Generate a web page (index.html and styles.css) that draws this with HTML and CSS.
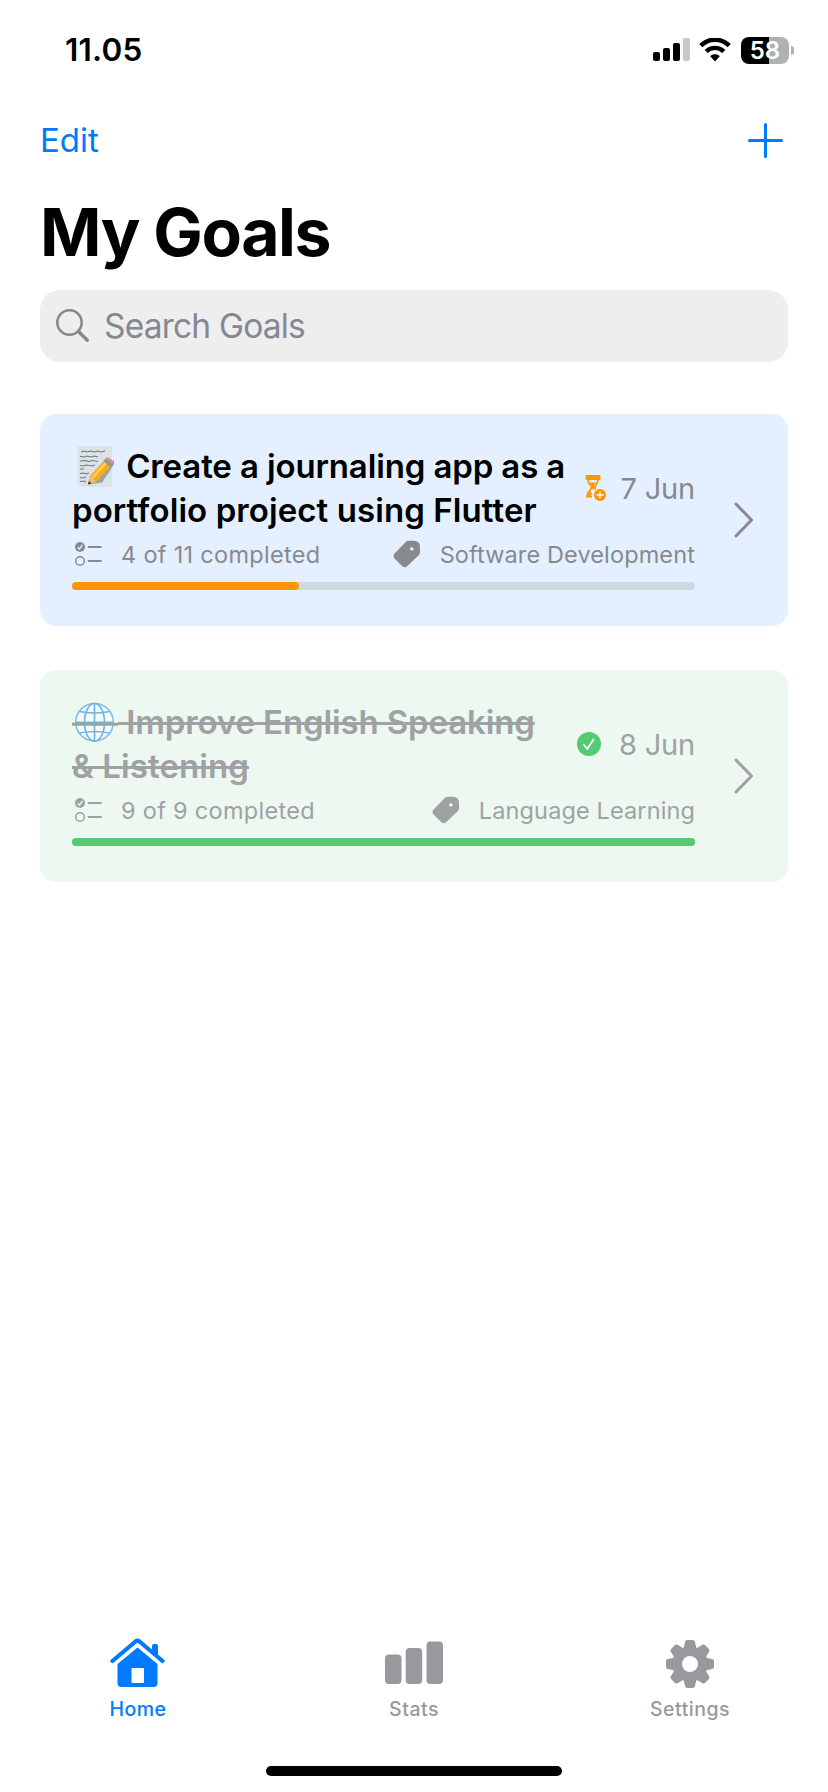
FILE: index.html
```html
<!DOCTYPE html>
<html lang="en">
<head>
    <meta charset="UTF-8">
    <meta name="viewport" content="width=device-width, initial-scale=1.0">
    <title>My Goals</title>
    <link rel="stylesheet" href="styles.css">
</head>
<body>
    <div class="status-bar">
        <span class="time">11.05</span>
        <div class="status-icons">
            <svg width="38" height="24" viewBox="0 0 38 24">
                <rect x="0" y="14" width="7" height="9" rx="2"/>
                <rect x="10" y="10" width="7" height="13" rx="2"/>
                <rect x="20" y="5" width="7" height="18" rx="2"/>
                <rect x="30" y="0" width="7" height="23" rx="2" fill="#c4c9cc"/>
            </svg>
            <svg class="wifi" width="32" height="24" viewBox="0 0 32 24">
                <path d="M1.8 7.7C10 -0.3 22 -0.3 30.2 7.7" fill="none" stroke="#000" stroke-width="4.6"/>
                <path d="M7.2 13.5C12.2 8.7 19.8 8.7 24.8 13.5" fill="none" stroke="#000" stroke-width="4.4"/>
                <path d="M11.2 18.3C14 15.7 18 15.7 20.8 18.3L16 23.5Z"/>
            </svg>
            <div class="battery"><span>58</span></div>
            <div class="battery-cap"></div>
        </div>
    </div>

    <header class="toolbar">
        <a class="edit">Edit</a>
        <svg width="36" height="36" viewBox="0 0 36 36">
            <path d="M17.5 1.5V33.5M1.5 17.5H33.5" stroke="#007aff" stroke-width="3" stroke-linecap="round"/>
        </svg>
    </header>

    <h1 class="page-title">My Goals</h1>

    <div class="search">
        <svg width="34" height="34" viewBox="0 0 34 34" fill="none" stroke="#858891" stroke-linecap="round">
            <circle cx="13.5" cy="13.5" r="12.2" stroke-width="2.6"/>
            <path d="M22.5 22.5L31.3 31.3" stroke-width="3.4"/>
        </svg>
        <span>Search Goals</span>
    </div>

    <main class="goals">
        <article class="goal active">
            <div class="goal-body">
                <div class="goal-top">
                    <h2 class="goal-title"><svg class="emoji" width="46" height="44" viewBox="0 0 46 44">
                            <rect x="5.5" y="2" width="34.5" height="41" fill="#dce3e6"/>
                            <path d="M9 8l3-1 3 1 4-1 3 1 4-1 3 1 4-1M8 12.500l4 .5 3-1 4 1 3-1 4 1M8 17l5-.5 4 1 4-1 5 1M8 21.500l3 .5 4-1 5 1 3-1M8 25h4M8 29.500l3-.5 4 1 2-1M8 33.500l3 .5 3-1M8 37.500l4-.5 2 1" fill="none" stroke="#6f777b" stroke-width="1.100"/>
                            <path d="M17 40.500l13-2 12-18v-5l-11 13z" fill="#9aa3a8"/>
                            <path d="M16 40.500l2-8.500 14-15.500 6.500 6L24 38z" fill="#fba91f"/>
                            <path d="M20 34.500l14-16" stroke="#ffd35a" stroke-width="2.500"/>
                            <path d="M18 32l6 6-8 2.500z" fill="#e2bd84"/>
                            <path d="M16 40.500l.9-3.500 2.600 2.500z" fill="#333"/>
                            <path d="M31.500 17l2.500-3 6.500 6-2.500 3z" fill="#8e979b"/>
                            <path d="M34 14c2-2 9 3 6.500 6z" fill="#e58a86"/>
                        </svg> Create a journaling app as a<br><span class="second-line">portfolio project using Flutter</span></h2>
                    <div class="goal-date">
                        <svg width="22" height="28" viewBox="0 0 22 28">
                            <path d="M1 1.500h14v4H1z" fill="#ff9500" stroke="#ff9500" stroke-linejoin="round"/>
                            <path d="M3 5.500c0 5 3.500 5.500 3.500 8S2 17.500 2 22.500h5M13 5.500c0 4-3 5.500-3 8 0 1.500 1 2 1 3" fill="none" stroke="#ff9500" stroke-width="1.800"/>
                            <path d="M5 8.500h6c-1 1.500-2 2-2 4v3H7.200c0-4-1.200-5-2.200-7zM6 17c-2 1.500-3.500 4-3 5.500l4-2z" fill="#ff9500"/>
                            <circle cx="15" cy="21" r="7" fill="#e4f0ff"/>
                            <circle cx="15" cy="21" r="6" fill="#ff9500"/>
                            <path d="M11.500 21h7M15 17.500v7" stroke="#fff" stroke-width="1.500"/>
                        </svg>
                        <span>7 Jun</span>
                    </div>
                </div>
                <div class="goal-meta">
                    <svg width="30" height="28" viewBox="0 0 30 28" fill="none" stroke="currentColor">
                        <circle cx="8" cy="7" r="5" fill="currentColor" stroke="none"/>
                        <path d="M5.700 7.200l1.700 1.900L10.400 5" stroke="#e4f0ff" stroke-width="1.300"/>
                        <circle cx="8" cy="21" r="4.300" stroke-width="1.500"/>
                        <path d="M16.500 7H29M16.500 21H29" stroke-width="1.800" stroke-linecap="round"/>
                    </svg>
                    <span class="done">4 of 11 completed</span>
                    <svg class="tag" width="28" height="28" viewBox="0 0 28 28">
                        <path fill-rule="evenodd" d="M12.500 2.200Q14 .8 16 .8H21Q27 1 27 7V12Q27 14 25.500 15.500L14 26.300Q11.500 28.200 9.300 26.300L1.500 18.500Q-.5 16.200 1.500 13.500ZM18.800 7.200a1.700 1.700 0 1 0 .1 0z" fill="currentColor"/>
                    </svg>
                    <span class="category">Software Development</span>
                </div>
                <div class="progress"><div class="progress-fill" style="width: 36.36%"></div></div>
            </div>
            <svg class="chevron" width="20" height="36" viewBox="0 0 20 36">
                <path d="M2 2L17.500 18L2 34" fill="none" stroke="currentColor" stroke-width="3" stroke-linecap="round" stroke-linejoin="round"/>
            </svg>
        </article>

        <article class="goal completed">
            <div class="goal-body">
                <div class="goal-top">
                    <h2 class="goal-title"><svg class="emoji" width="46" height="44" viewBox="0 0 46 44" fill="none">
                            <circle cx="22.500" cy="22.300" r="18.800" fill="#f7fbfb" stroke="#7cbbe5" stroke-width="1.500"/>
                            <ellipse cx="22.500" cy="22.300" rx="10" ry="18.800" stroke="#72b6e5" stroke-width="1.700"/>
                            <path d="M22.500 3.500V41M7.500 11.500Q22.500 14.500 37.500 11.500M3.500 22.300H41.500M7.500 33Q22.500 30 37.500 33" stroke="#72b6e5" stroke-width="1.700"/>
                            <path d="M0 24.300H46" stroke="#a0a1a4" stroke-width="3"/>
                        </svg> Improve English Speaking<br><span class="second-line">&amp; Listening</span></h2>
                    <div class="goal-date">
                        <svg width="24" height="24" viewBox="0 0 24 24">
                            <circle cx="12" cy="12" r="12" fill="#56cb73"/>
                            <path d="M6.800 12.800L10.300 17L16.500 7.500" fill="none" stroke="#fff" stroke-width="1.700" stroke-linecap="round" stroke-linejoin="round"/>
                        </svg>
                        <span>8 Jun</span>
                    </div>
                </div>
                <div class="goal-meta">
                    <svg width="30" height="28" viewBox="0 0 30 28" fill="none" stroke="currentColor">
                        <circle cx="8" cy="7" r="5" fill="currentColor" stroke="none"/>
                        <path d="M5.700 7.200l1.700 1.900L10.400 5" stroke="#edf8f1" stroke-width="1.300"/>
                        <circle cx="8" cy="21" r="4.300" stroke-width="1.500"/>
                        <path d="M16.500 7H29M16.500 21H29" stroke-width="1.800" stroke-linecap="round"/>
                    </svg>
                    <span class="done">9 of 9 completed</span>
                    <svg class="tag" width="28" height="28" viewBox="0 0 28 28">
                        <path fill-rule="evenodd" d="M12.500 2.200Q14 .8 16 .8H21Q27 1 27 7V12Q27 14 25.500 15.500L14 26.300Q11.500 28.200 9.300 26.300L1.500 18.500Q-.5 16.200 1.500 13.500ZM18.800 7.200a1.700 1.700 0 1 0 .1 0z" fill="currentColor"/>
                    </svg>
                    <span class="category">Language Learning</span>
                </div>
                <div class="progress"><div class="progress-fill" style="width: 100%"></div></div>
            </div>
            <svg class="chevron" width="20" height="36" viewBox="0 0 20 36">
                <path d="M2 2L17.500 18L2 34" fill="none" stroke="currentColor" stroke-width="3" stroke-linecap="round" stroke-linejoin="round"/>
            </svg>
        </article>
    </main>

    <nav class="tab-bar">
        <a class="tab selected">
            <svg width="56" height="50" viewBox="0 0 56 50">
                <path d="M2.500 23L25.500 3.500Q27.500 2 29.500 3.500L52.500 23" fill="none" stroke="currentColor" stroke-width="4.200" stroke-linecap="round" stroke-linejoin="round"/>
                <path d="M42 15V8Q42 6 44 6H46Q48 6 48 8V20Z" fill="currentColor"/>
                <path fill-rule="evenodd" d="M27.500 9.500L47.500 26V45Q47.500 49 43.500 49H11.500Q7.500 49 7.500 45V26ZM22.500 30Q21.500 30 21.500 31V44Q21.500 45 22.500 45H33Q34 45 34 44V31Q34 30 33 30Z" fill="currentColor"/>
            </svg>
            <span>Home</span>
        </a>
        <a class="tab">
            <svg width="58" height="50" viewBox="0 0 58 50" fill="currentColor">
                <rect x="0" y="16.500" width="16.500" height="29.500" rx="4"/>
                <rect x="20.700" y="10" width="16.500" height="36" rx="4"/>
                <rect x="41.500" y="3.500" width="16.500" height="42.500" rx="4"/>
            </svg>
            <span>Stats</span>
        </a>
        <a class="tab">
            <svg width="50" height="50" viewBox="-25 -26 50 50">
                <defs>
                    <path id="tooth" d="M-8 -14Q-5.500 -17 -5.200 -21Q-5 -24 -2.500 -24H2.500Q5 -24 5.200 -21Q5.500 -17 8 -14Z"/>
                </defs>
                <g fill="currentColor">
                    <circle r="12.500" fill="none" stroke="currentColor" stroke-width="9"/>
                    <use href="#tooth"/>
                    <use href="#tooth" transform="rotate(45)"/>
                    <use href="#tooth" transform="rotate(90)"/>
                    <use href="#tooth" transform="rotate(135)"/>
                    <use href="#tooth" transform="rotate(180)"/>
                    <use href="#tooth" transform="rotate(225)"/>
                    <use href="#tooth" transform="rotate(270)"/>
                    <use href="#tooth" transform="rotate(315)"/>
                </g>
            </svg>
            <span>Settings</span>
        </a>
    </nav>
    <div class="home-indicator"></div>
</body>
</html>
```
FILE: styles.css
```css
* {
    box-sizing: border-box;
}
body {
    margin: 0;
    height: 1792px;
    display: flex;
    flex-direction: column;
    background-color: #fff;
    color: #000;
    font-family: Inter, "Noto Sans", sans-serif;
}
svg {
    display: block;
    flex: none;
}
.status-bar {
    display: flex;
    justify-content: space-between;
    align-items: center;
    height: 100px;
    padding: 0 34px 0 65px;
}
.time {
    padding-bottom: 2px;
    font-size: 31.5px;
    font-weight: 600;
    letter-spacing: 0.2px;
}
.status-icons {
    display: flex;
    align-items: center;
}
.wifi {
    margin: 0 10px 0 8px;
}
.battery {
    width: 48px;
    height: 27px;
    border-radius: 8px;
    background: linear-gradient(to right, #000 28px, #aeb2b4 28px);
    color: #fff;
    font-size: 24px;
    font-weight: 600;
    line-height: 27px;
    text-align: center;
}
.battery-cap {
    width: 3px;
    height: 9px;
    margin-left: 2px;
    border-radius: 0 4px 4px 0;
    background-color: #aeb2b4;
}
.toolbar {
    display: flex;
    justify-content: space-between;
    align-items: center;
    height: 82px;
    padding: 0 44px 0 40px;
}
.edit {
    padding-bottom: 2px;
    color: #007aff;
    font-size: 33px;
}
.page-title {
    margin: 10px 0 18px 40px;
    height: 80px;
    font-size: 66px;
    font-weight: 700;
    line-height: 80px;
    letter-spacing: -1.4px;
}
.search {
    display: flex;
    align-items: center;
    gap: 14px;
    height: 72px;
    margin: 0 40px;
    padding-left: 16px;
    border-radius: 20px;
    background-color: #eee;
    color: #858891;
    font-size: 33.5px;
    letter-spacing: -0.8px;
}
.goals {
    display: flex;
    flex-direction: column;
    gap: 44px;
    margin: 52px 40px 0;
}
.goal {
    display: flex;
    align-items: center;
    height: 212px;
    padding: 0 34px 0 32px;
    border-radius: 16px;
}
.goal.active {
    background-color: #e4f0ff;
    color: #88898e;
}
.goal.completed {
    background-color: #edf8f1;
    color: #a0a1a4;
}
.goal-body {
    width: 623px;
    padding-bottom: 6px;
}
.goal-top {
    display: flex;
    justify-content: space-between;
    align-items: center;
    height: 88px;
}
.goal-title {
    margin: 0;
    font-size: 33px;
    font-weight: 600;
    line-height: 44px;
    letter-spacing: -0.13px;
    white-space: nowrap;
}
.second-line {
    letter-spacing: 0.08px;
}
.active .goal-title {
    color: #000;
}
.completed .goal-title {
    text-decoration: line-through 3px;
}
.emoji {
    display: inline-block;
    vertical-align: top;
}
.goal-date {
    display: flex;
    align-items: center;
    gap: 14px;
    font-size: 29px;
    letter-spacing: -0.2px;
}
.completed .goal-date {
    gap: 18px;
}
.goal-meta {
    display: flex;
    align-items: center;
    height: 44px;
    font-size: 23.5px;
    letter-spacing: 0.3px;
}
.done {
    margin-left: 19px;
}
.tag {
    margin-left: auto;
    margin-right: 19px;
}
.category {
    letter-spacing: 0.12px;
}
.progress {
    height: 8px;
    margin-top: 6px;
    border-radius: 4px;
    background-color: #ced8e1;
}
.progress-fill {
    height: 8px;
    border-radius: 4px;
    background-color: #ff9500;
}
.completed .progress-fill {
    background-color: #56cb73;
}
.chevron {
    margin-left: auto;
}
.tab-bar {
    display: grid;
    grid-template-columns: repeat(3, 1fr);
    margin-top: auto;
}
.tab {
    display: flex;
    flex-direction: column;
    align-items: center;
    gap: 8px;
    color: #98999c;
    font-size: 19.5px;
    font-weight: 500;
    line-height: 26px;
    letter-spacing: 0.5px;
}
.tab.selected {
    color: #007aff;
}
.home-indicator {
    width: 296px;
    height: 10px;
    margin: 44px auto 16px;
    border-radius: 5px;
    background-color: #000;
}
```
